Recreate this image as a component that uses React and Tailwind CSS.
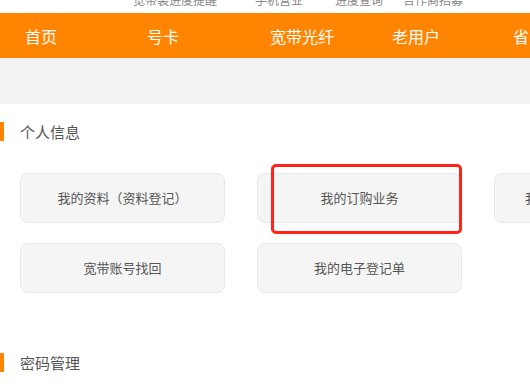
import React from 'react';

const navItems = [
  { label: '首页', w: 'w-[122px]' },
  { label: '号卡', w: 'w-[123px]' },
  { label: '宽带光纤', w: 'w-[122px]' },
  { label: '老用户', w: 'w-[121px]' },
  { label: '省内活动', w: 'w-[80px]' },
];

const row1 = ['我的资料（资料登记）', '我的订购业务', '我的业务（已订购业务）'];
const row2 = ['宽带账号找回', '我的电子登记单'];

function Tile({ children, highlight }) {
  return (
    <div className="relative w-[205px] h-[50px] shrink-0 rounded-lg border border-[#e8e8e8] bg-[#f5f5f5] flex items-center justify-center text-[13px] text-[#555] whitespace-nowrap">
      {children}
      {highlight && (
        <div className="absolute left-[13px] top-[-10px] w-[191px] h-[70px] rounded-[5px] border-[3.5px] border-[#ff2418]" />
      )}
    </div>
  );
}

function Heading({ children }) {
  return (
    <div className="flex items-center h-[19px]">
      <div className="w-[4px] h-[19px] bg-[#ff8400]" />
      <h3 className="ml-[16px] text-[15px] leading-[19px] text-[#555]">{children}</h3>
    </div>
  );
}

export default function App() {
  return (
    <div
      className="w-[530px] h-[390px] overflow-hidden bg-white"
      style={{ fontFamily: '"Microsoft YaHei", "Noto Sans CJK SC", sans-serif' }}
    >
      {/* top links, scrolled mostly out of view */}
      <div className="h-[13px] overflow-hidden text-[12px] text-[#888] whitespace-nowrap">
        <div className="flex mt-[-9px]">
          <span className="ml-[133px] w-[122px]">宽带装进度提醒</span>
          <span className="w-[80px]">手机营业</span>
          <span className="w-[68px]">进度查询</span>
          <span>合作商招募</span>
        </div>
      </div>

      <nav className="h-[45px] bg-[#ff8400] flex items-center pl-[25px] text-white text-[16px] whitespace-nowrap">
        {navItems.map((n) => (
          <div key={n.label} className={`${n.w} shrink-0`}>{n.label}</div>
        ))}
      </nav>

      <div className="h-[46px] bg-[#f2f2f2]" />

      <section className="pt-[18px]">
        <Heading>个人信息</Heading>
        <div className="mt-[32px] pl-[20px] flex flex-col gap-[20px]">
          <div className="flex gap-[32px]">
            {row1.map((t, i) => (
              <Tile key={t} highlight={i === 1}>{t}</Tile>
            ))}
          </div>
          <div className="flex gap-[32px]">
            {row2.map((t) => (
              <Tile key={t}>{t}</Tile>
            ))}
          </div>
        </div>
      </section>

      <section className="pt-[60px]">
        <Heading>密码管理</Heading>
      </section>
    </div>
  );
}
